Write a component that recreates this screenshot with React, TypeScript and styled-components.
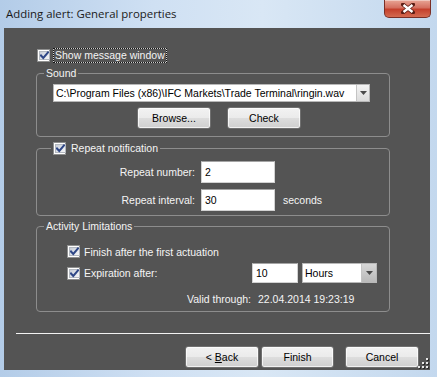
import styled, { createGlobalStyle } from "styled-components";

const GlobalStyle = createGlobalStyle`
  html, body {
    margin: 0;
    padding: 0;
  }
  body {
    background: #bcd3eb;
    font-family: "Liberation Sans", Arial, sans-serif;
    font-size: 10.5px;
  }
`;

const Window = styled.div`
  width: 437px;
  height: 377px;
  display: flex;
  flex-direction: column;
  background: linear-gradient(90deg, #b3cce8 0%, #cfe0f3 35%, #d9e7f5 60%, #c3d8ee 100%);
  overflow: hidden;
`;

const TitleBar = styled.div`
  height: 28px;
  flex: none;
  display: flex;
  justify-content: space-between;
  align-items: flex-start;
`;

const Title = styled.div`
  font-family: "Open Sans", "Noto Sans", sans-serif;
  font-size: 11.4px;
  line-height: 16px;
  color: #1a1a1a;
  padding: 6px 0 0 6px;
`;

const CloseButton = styled.div`
  width: 47px;
  height: 18px;
  margin-right: 6px;
  box-sizing: border-box;
  border: 1px solid #7a2f26;
  border-top: none;
  border-radius: 0 0 5px 5px;
  background: linear-gradient(#e8a696 0%, #d47060 45%, #c4402c 55%, #d46a50 100%);
  display: flex;
  align-items: center;
  justify-content: center;
  box-shadow: inset 0 1px 0 rgba(255, 255, 255, 0.4);
`;

const Frame = styled.div`
  flex: 1;
  display: flex;
  padding: 0 7px 7px 4px;
`;

const Content = styled.div`
  flex: 1;
  min-width: 0;
  position: relative;
  background: #545454;
  display: flex;
  flex-direction: column;
  color: #f4f4f4;
  white-space: nowrap;
`;

const Main = styled.div`
  display: flex;
  flex-direction: column;
  padding: 20px 40px 0 32px;
`;

const ShowRow = styled.div`
  height: 15px;
  display: flex;
  align-items: center;
  gap: 3px;
  padding-left: 1px;
`;

const Focused = styled.span`
  line-height: 13px;
  padding: 0 1px;
  outline: 1px dotted #111;
  box-shadow: 0 0 0 1px #cfcfcf;
  margin-left: 1px;
`;

const Group = styled.fieldset<{ $gap: number }>`
  margin: ${(p) => p.$gap}px 0 0 0;
  padding: 0;
  border: 1px solid #8d8d8d;
  border-radius: 4px;
  min-width: 0;
`;

const Legend = styled.legend<{ $offset: number }>`
  margin-left: ${(p) => p.$offset}px;
  padding: 0 2px;
  line-height: 13px;
  color: #f4f4f4;
  display: flex;
  align-items: center;
  gap: 5px;
`;

const GroupBody = styled.div<{ $top: number; $bottom: number; $left: number }>`
  display: flex;
  flex-direction: column;
  padding: ${(p) => p.$top}px 12px ${(p) => p.$bottom}px ${(p) => p.$left}px;
`;

const Combo = styled.div<{ $w: number; $h: number }>`
  width: ${(p) => p.$w}px;
  height: ${(p) => p.$h}px;
  box-sizing: border-box;
  display: flex;
  background: #fff;
  border: 1px solid #b8b8b8;
  color: #000;
`;

const ComboText = styled.span`
  flex: 1;
  display: flex;
  align-items: center;
  padding-left: 2px;
  overflow: hidden;
`;

const ComboArrow = styled.span<{ $dark?: boolean }>`
  width: ${(p) => (p.$dark ? 14 : 12)}px;
  display: flex;
  align-items: center;
  justify-content: center;
  background: ${(p) =>
    p.$dark
      ? "linear-gradient(#d6d6d6, #b9b9b9)"
      : "linear-gradient(#f4f4f4, #dcdcdc)"};
  border-left: 1px solid #c4c4c4;
`;

const ButtonRow = styled.div<{ $top: number; $left: number; $gap: number }>`
  display: flex;
  gap: ${(p) => p.$gap}px;
  margin-top: ${(p) => p.$top}px;
  padding-left: ${(p) => p.$left}px;
`;

const Button = styled.button<{ $w?: number; $space?: number }>`
  width: ${(p) => p.$w ?? 74}px;
  height: 22px;
  margin-left: ${(p) => p.$space ?? 0}px;
  padding: 0;
  box-sizing: border-box;
  border: 1px solid #707070;
  border-radius: 3px;
  background: linear-gradient(#f2f2f2 0%, #ebebeb 48%, #dddddd 52%, #cfcfcf 100%);
  box-shadow: inset 0 0 0 1px rgba(255, 255, 255, 0.7);
  font-family: "Liberation Sans", Arial, sans-serif;
  font-size: 10.5px;
  color: #000;
`;

const FieldRow = styled.div<{ $top: number }>`
  display: flex;
  align-items: center;
  margin-top: ${(p) => p.$top}px;
`;

const FieldLabel = styled.span`
  width: 158px;
  text-align: right;
  margin-right: 6px;
`;

const TextBox = styled.div<{ $w: number; $h: number }>`
  width: ${(p) => p.$w}px;
  height: ${(p) => p.$h}px;
  box-sizing: border-box;
  background: #fff;
  border: 1px solid #d2d2d2;
  border-top-color: #a4a4a4;
  color: #000;
  display: flex;
  align-items: center;
  padding-left: 3px;
`;

const Unit = styled.span`
  margin-left: 8px;
`;

const CheckRow = styled.div<{ $top: number; $h: number }>`
  display: flex;
  align-items: center;
  height: ${(p) => p.$h}px;
  margin-top: ${(p) => p.$top}px;
  gap: 4px;
`;

const Spacer = styled.div`
  flex: 1;
`;

const Controls = styled.div`
  display: flex;
  gap: 4px;
`;

const ValidRow = styled.div`
  display: flex;
  gap: 7px;
  line-height: 13px;
  margin-top: 10px;
  padding-left: 120px;
`;

const Footer = styled.div`
  display: flex;
  flex-direction: column;
`;

const Separator = styled.div`
  height: 1px;
  margin: 21px 0 0 12px;
  background: #f2f2f2;
`;

const Grip = styled.svg`
  position: absolute;
  right: 1px;
  bottom: 1px;
`;

const Box = styled.span`
  width: 13px;
  height: 13px;
  flex: none;
  box-sizing: border-box;
  border: 1px solid #8e8f8f;
  background: #fff;
  padding: 1px;
  display: inline-flex;
`;

const BoxInner = styled.span`
  flex: 1;
  display: flex;
  align-items: center;
  justify-content: center;
  background: linear-gradient(135deg, #c6ccd6 0%, #e4e7ec 60%, #f6f6f6 100%);
  border: 1px solid #b3b8c0;
`;

function Check() {
  return (
    <Box>
      <BoxInner>
        <svg width="9" height="9" viewBox="0 0 9 9">
          <path
            d="M1 4.5 L3.3 7 L8 1.5"
            fill="none"
            stroke="#2f4787"
            strokeWidth="2"
            strokeLinecap="square"
          />
        </svg>
      </BoxInner>
    </Box>
  );
}

function Arrow() {
  return (
    <svg width="7" height="4" viewBox="0 0 7 4">
      <path d="M0 0 H7 L3.5 4 Z" fill="#4a4a4a" />
    </svg>
  );
}

export default function App() {
  return (
    <>
      <GlobalStyle />
      <Window>
        <TitleBar>
          <Title>Adding alert: General properties</Title>
          <CloseButton>
            <svg width="14" height="11" viewBox="0 0 14 11">
              <path d="M2 1.5 L12 9.5 M12 1.5 L2 9.5" stroke="#5b1d14" strokeWidth="4" strokeLinecap="round" />
              <path d="M2.5 2 L11.5 9 M11.5 2 L2.5 9" stroke="#ffffff" strokeWidth="2.4" />
            </svg>
          </CloseButton>
        </TitleBar>
        <Frame>
          <Content>
            <Main>
              <ShowRow>
                <Check />
                <Focused>Show message window</Focused>
              </ShowRow>

              <Group $gap={4}>
                <Legend $offset={7}>Sound</Legend>
                <GroupBody $top={4} $bottom={7} $left={16}>
                  <Combo $w={317} $h={18}>
                    <ComboText>C:\Program Files (x86)\IFC Markets\Trade Terminal\ringin.wav</ComboText>
                    <ComboArrow>
                      <Arrow />
                    </ComboArrow>
                  </Combo>
                  <ButtonRow $top={5} $left={84} $gap={16}>
                    <Button>Browse...</Button>
                    <Button>Check</Button>
                  </ButtonRow>
                </GroupBody>
              </Group>

              <Group $gap={5}>
                <Legend $offset={14}>
                  <Check />
                  Repeat notification
                </Legend>
                <GroupBody $top={6} $bottom={4} $left={0}>
                  <FieldRow $top={0}>
                    <FieldLabel>Repeat number:</FieldLabel>
                    <TextBox $w={74} $h={22}>2</TextBox>
                  </FieldRow>
                  <FieldRow $top={6}>
                    <FieldLabel>Repeat interval:</FieldLabel>
                    <TextBox $w={74} $h={22}>30</TextBox>
                    <Unit>seconds</Unit>
                  </FieldRow>
                </GroupBody>
              </Group>

              <Group $gap={4}>
                <Legend $offset={7}>Activity Limitations</Legend>
                <GroupBody $top={11} $bottom={5} $left={30}>
                  <CheckRow $top={0} $h={15}>
                    <Check />
                    Finish after the first actuation
                  </CheckRow>
                  <CheckRow $top={4} $h={20}>
                    <Check />
                    Expiration after:
                    <Spacer />
                    <Controls>
                      <TextBox $w={46} $h={20}>10</TextBox>
                      <Combo $w={75} $h={20}>
                        <ComboText>Hours</ComboText>
                        <ComboArrow $dark>
                          <Arrow />
                        </ComboArrow>
                      </Combo>
                    </Controls>
                  </CheckRow>
                  <ValidRow>
                    <span>Valid through:</span>
                    <span>22.04.2014 19:23:19</span>
                  </ValidRow>
                </GroupBody>
              </Group>
            </Main>

            <Footer>
              <Separator />
              <ButtonRow $top={12} $left={181} $gap={2}>
                <Button>
                  &lt; <u>B</u>ack
                </Button>
                <Button $w={73}>Finish</Button>
                <Button $space={9}>Cancel</Button>
              </ButtonRow>
            </Footer>

            <Grip width="12" height="12" viewBox="0 0 12 12">
              {[
                [9, 1],
                [9, 5],
                [5, 5],
                [9, 9],
                [5, 9],
                [1, 9],
              ].map(([x, y]) => (
                <g key={`${x}-${y}`}>
                  <rect x={x + 1} y={y + 1} width="2" height="2" fill="#2a2a2a" />
                  <rect x={x} y={y} width="2" height="2" fill="#e6e6e6" />
                </g>
              ))}
            </Grip>
          </Content>
        </Frame>
      </Window>
    </>
  );
}
